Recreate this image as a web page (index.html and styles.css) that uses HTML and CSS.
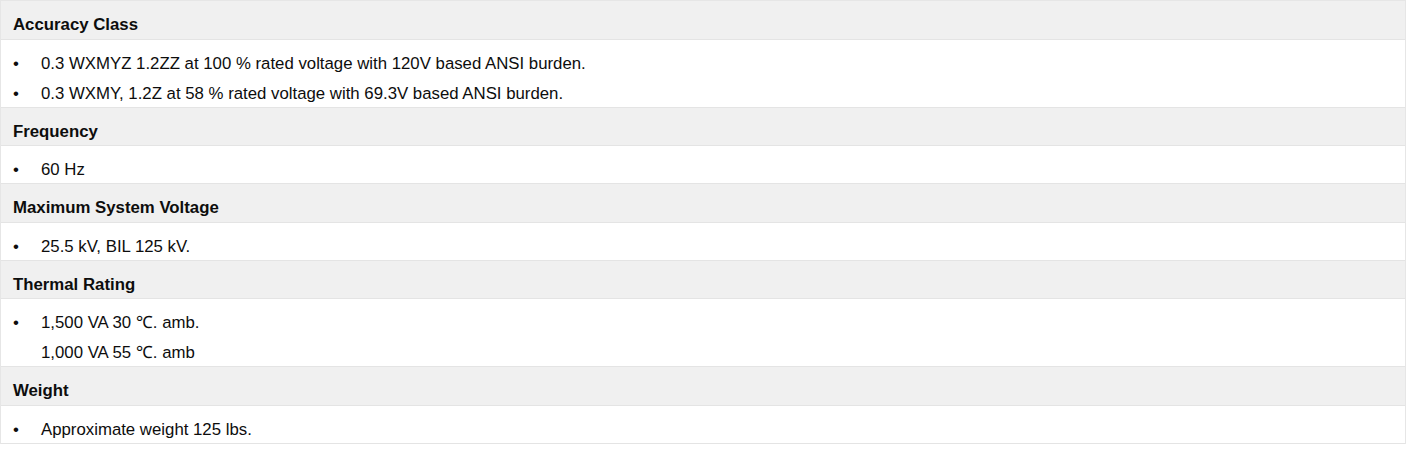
FILE: index.html
```html
<!DOCTYPE html>
<html>
<head>
<meta charset="utf-8">
<link rel="stylesheet" href="styles.css">
</head>
<body>
<div class="specs">
  <div class="head">Accuracy Class</div>
  <ul class="body">
    <li>0.3 WXMYZ 1.2ZZ at 100 % rated voltage with 120V based ANSI burden.</li>
    <li>0.3 WXMY, 1.2Z at 58 % rated voltage with 69.3V based ANSI burden.</li>
  </ul>
  <div class="head">Frequency</div>
  <ul class="body">
    <li>60 Hz</li>
  </ul>
  <div class="head">Maximum System Voltage</div>
  <ul class="body">
    <li>25.5 kV, BIL 125 kV.</li>
  </ul>
  <div class="head">Thermal Rating</div>
  <ul class="body">
    <li>1,500 VA 30 ℃. amb.</li>
    <li class="cont">1,000 VA 55 ℃. amb</li>
  </ul>
  <div class="head">Weight</div>
  <ul class="body">
    <li>Approximate weight 125 lbs.</li>
  </ul>
</div>
</body>
</html>
```

FILE: styles.css
```css
html, body {
  margin: 0;
  padding: 0;
  background: #ffffff;
}
body {
  font-family: "Liberation Sans", Arial, sans-serif;
  font-size: 16.8px;
  color: #0d0d0d;
}
.specs {
  width: 1406px;
  border: 1px solid #e6e6e6;
  border-bottom: none;
  box-sizing: border-box;
}
.head {
  background: #f0f0f0;
  font-weight: bold;
  line-height: 20px;
  padding: 14px 0 3.5px 12px;
  border-bottom: 1px solid #e4e4e4;
}
.body {
  list-style: none;
  margin: 0;
  padding: 11px 0 0 0;
  border-bottom: 1px solid #e4e4e4;
}
.body li {
  position: relative;
  line-height: 26px;
  padding-left: 40px;
}
.body li + li {
  margin-top: 4px;
}
.body li::before {
  content: "•";
  position: absolute;
  left: 12px;
  top: 0;
}
.body li.cont::before {
  content: none;
}
```
